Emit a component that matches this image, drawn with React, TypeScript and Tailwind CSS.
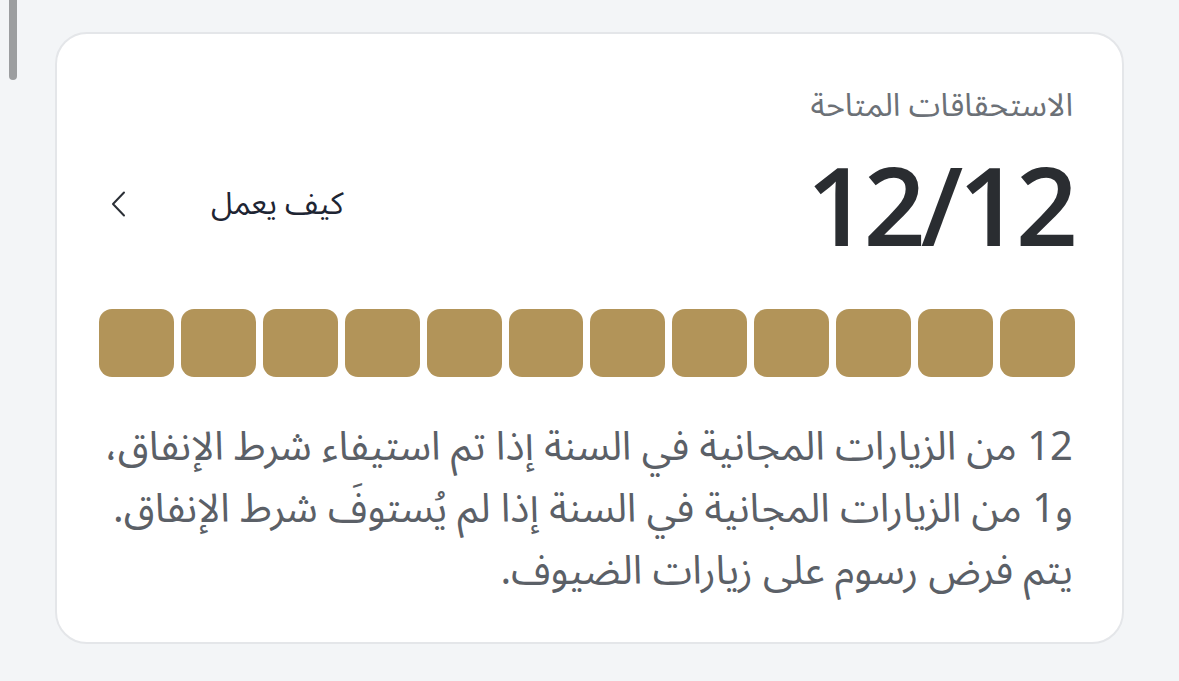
import React from "react";

const arabicFont = {
  fontFamily:
    '"Noto Sans Arabic", "Noto Naskh Arabic", "DejaVu Sans", sans-serif',
};

export default function App() {
  const segs = Array.from({ length: 12 });
  return (
    <div className="relative w-[1179px] h-[681px] overflow-hidden bg-[#f3f5f7]">
      <div className="absolute left-[9px] top-0 w-[8px] h-[80px] rounded-b-full bg-[#9c9ea0]" />
      <div className="pt-[32px] pl-[55px]">
        <div
          dir="rtl"
          className="w-[1069px] h-[612px] rounded-[32px] border-2 border-[#e4e6e9] bg-white pr-[49px] pl-[40px] pt-[44px]"
          style={arabicFont}
        >
          <div className="text-[32px] leading-[56px] text-[#6c7177]">
            الاستحقاقات المتاحة
          </div>
          <div className="mt-[18px] flex items-center justify-between h-[104px]">
            <div
              dir="ltr"
              className="text-[109px] leading-[104px] text-[#2a2d31] font-semibold tracking-[-5px]"
              style={{ fontFamily: '"Open Sans", Inter, sans-serif' }}
            >
              12/12
            </div>
            <div className="flex items-center gap-[84px] ml-[14px]">
              <span className="text-[31px] text-[#1e2533]">كيف يعمل</span>
              <svg
                width="16"
                height="26"
                viewBox="0 0 16 26"
                fill="none"
                stroke="#2b2f36"
                strokeWidth="2"
                strokeLinecap="round"
                strokeLinejoin="round"
              >
                <path d="M13 1.5 L2 13 L13 24.5" />
              </svg>
            </div>
          </div>
          <div dir="ltr" className="mt-[53px] grid grid-cols-12 gap-[7px] ml-[2px] mr-[-2px]">
            {segs.map((_, i) => (
              <div key={i} className="h-[68px] rounded-[13px] bg-[#b29459]" />
            ))}
          </div>
          <div className="mt-[40px] text-[40px] leading-[62px] text-[#5b6067] whitespace-nowrap">
            <div>12 من الزيارات المجانية في السنة إذا تم استيفاء شرط الإنفاق،</div>
            <div>و1 من الزيارات المجانية في السنة إذا لم يُستوفَ شرط الإنفاق.</div>
            <div>يتم فرض رسوم على زيارات الضيوف.</div>
          </div>
        </div>
      </div>
    </div>
  );
}
